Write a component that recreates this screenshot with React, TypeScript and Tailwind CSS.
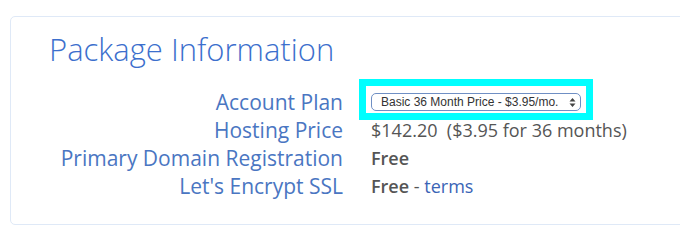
import React from "react";

export default function App() {
  const label = "text-right text-[21px] leading-[28px] text-[#4a76c2] whitespace-nowrap";
  const value = "text-[18px] leading-[28px] text-[#555] whitespace-nowrap";
  return (
    <div className="w-[680px] h-[241px] bg-white overflow-hidden pt-[16px] pl-[10px]" style={{ fontFamily: '"Open Sans", sans-serif' }}>
      <div className="w-[700px] h-[209px] border border-[#dfe9f7] rounded-[5px] pl-[38px] pt-[10px]">
        <h1 className="text-[31px] leading-[44px] text-[#3c6fcd] font-light">Package Information</h1>
        <div className="grid grid-cols-[294px_1fr] gap-x-[28px] mt-[17px]">
          <div className={label}>Account Plan</div>
          <div className="flex items-center">
            <div className="relative">
              <span className="absolute left-[-12px] right-[-12px] top-[-14px] bottom-[-9px] border-[7px] border-[#00ffff]" />
              <div className="relative flex items-center justify-between w-[210px] h-[18px] rounded-[5px] border border-[#6f8fc4] bg-white pl-[9px] pr-[4px] text-[12px] text-[#333]" style={{ fontFamily: '"Liberation Sans", Arial, sans-serif' }}>
                <span>Basic 36 Month Price - $3.95/mo.</span>
                <svg width="7" height="11" viewBox="0 0 7 11">
                  <path d="M0.5 4.5 L3.5 1 L6.5 4.5 Z M0.5 6.5 L3.5 10 L6.5 6.5 Z" fill="#444" />
                </svg>
              </div>
            </div>
          </div>
          <div className={label}>Hosting Price</div>
          <div className={value}>$142.20&nbsp; ($3.95 for 36 months)</div>
          <div className={label}>Primary Domain Registration</div>
          <div className={value + " font-semibold"}>Free</div>
          <div className={label}>Let's Encrypt SSL</div>
          <div className={value}>
            <span className="font-semibold">Free</span> - <a className="text-[#3a64b6]">terms</a>
          </div>
        </div>
      </div>
    </div>
  );
}
